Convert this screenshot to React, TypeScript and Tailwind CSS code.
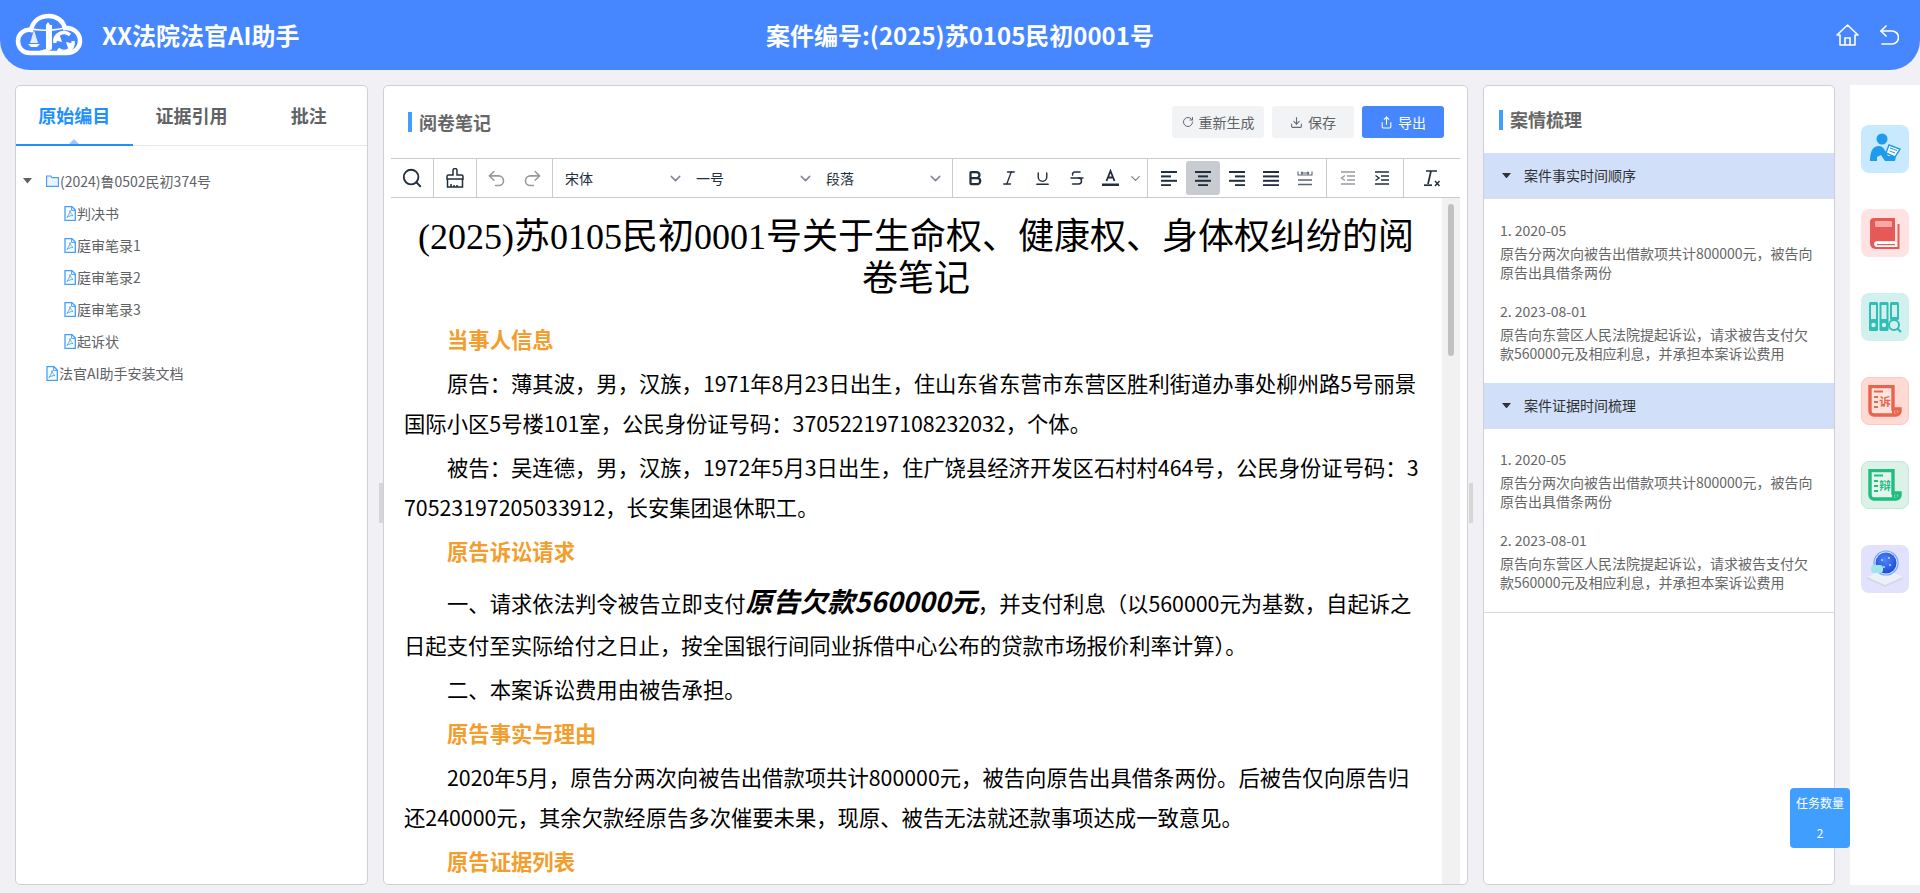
import React from 'react';
import { Bold, Italic, Underline, Strikethrough, Search, Undo2, Redo2, ChevronDown, RotateCw, Download, Share } from 'lucide-react';

const CJK = '"Noto Sans CJK SC","Noto Sans",sans-serif';

function Logo() {
  return (
    <svg width="68" height="44" viewBox="0 0 68 44">
      <path d="M15 40C7 40 3 34 3 28C3 21 9 16 16 17C18 8 25 3 34 3C42 3 48 8 50 15C58 14 65 20 65 28C65 35 59 40 52 40Z" fill="#4687ff" stroke="#fff" strokeWidth="4.5" />
      <path d="M3 30C5 38 10 41 18 41L30 41L37 36L37 12H35L33 9L31 12V36L24 38H15C9 38 6 35 5 30Z" fill="#fff" />
      <path d="M14 15C22 18 42 18 52 14" stroke="#fff" strokeWidth="1.5" fill="none" />
      <path d="M19 17L15 30H23Z" fill="#fff" opacity=".85" />
      <path d="M13 31H25L22 34H16Z" fill="#fff" />
      <path d="M40 30A9 9 0 0 1 55 22M58 28A9 9 0 0 1 43 36" stroke="#fff" strokeWidth="3.5" fill="none" />
      <path d="M38 27L44 20L47 29Z" fill="#fff" />
      <path d="M60 31L54 38L51 29Z" fill="#fff" />
    </svg>
  );
}

function Pdf() {
  return (
    <svg width="12" height="15" viewBox="0 0 12 15" className="shrink-0">
      <path d="M1 .7H8L11.3 4V14.3H1Z" fill="#fff" stroke="#409eff" strokeWidth="1.3" />
      <path d="M7.6 1V4.4H11" fill="none" stroke="#409eff" strokeWidth="1" />
      <path d="M6 4.5C5.5 7 5 9 2.8 11.5C5 10 7 9.5 9 9.6C7.5 8.5 6.5 7 6 4.5Z" fill="none" stroke="#409eff" strokeWidth=".9" />
    </svg>
  );
}

function Folder() {
  return (
    <svg width="13" height="12" viewBox="0 0 13 12" className="block shrink-0">
      <path d="M.6 1H4.8L6 2.6H12.4V11.4H.6Z" fill="#eaf4ff" stroke="#409eff" strokeWidth="1.1" />
    </svg>
  );
}

function Caret({ color = '#606266', size = 8 }: { color?: string; size?: number }) {
  return (
    <svg width={size} height={size * 0.6} viewBox="0 0 10 6" className="shrink-0">
      <path d="M0 0H10L5 6Z" fill={color} />
    </svg>
  );
}

function TreeRow({ indent, children, icon }: { indent: string; children: React.ReactNode; icon: React.ReactNode }) {
  return (
    <div className={`flex h-[32px] items-center text-[14px] text-[#606266] ${indent}`}>
      {icon}
      <span className="ml-[1px]">{children}</span>
    </div>
  );
}

function LeftPanel() {
  return (
    <section className="flex h-full w-[353px] shrink-0 flex-col rounded-[5px] border border-[#cfd0d6] bg-white">
      <div className="flex h-[60px] border-b border-[#e4e7ed] text-[18px] font-bold text-[#606266]">
        <div className="relative -mb-[1px] flex w-[117px] items-center justify-center border-b-2 border-[#1e90ff] text-[#1e90ff]">
          原始编目
          <span className="absolute bottom-0 left-1/2 h-0 w-0 -translate-x-1/2 border-x-[5px] border-b-[5px] border-x-transparent border-b-[#9cc9f5]" />
        </div>
        <div className="flex w-[118px] items-center justify-center">证据引用</div>
        <div className="flex w-[117px] items-center justify-center">批注</div>
      </div>
      <div className="pt-[19px]">
        <div className="flex h-[32px] items-center pl-[7px] text-[14px] text-[#606266]">
          <Caret size={9} />
          <span className="ml-[14px]"><Folder /></span>
          <span className="ml-[1px]">(2024)鲁0502民初374号</span>
        </div>
        {['判决书', '庭审笔录1', '庭审笔录2', '庭审笔录3', '起诉状'].map((t) => (
          <TreeRow key={t} indent="pl-[48px]" icon={<Pdf />}>{t}</TreeRow>
        ))}
        <TreeRow indent="pl-[30px]" icon={<Pdf />}>法官AI助手安装文档</TreeRow>
      </div>
    </section>
  );
}

function SectionTitle({ children }: { children: React.ReactNode }) {
  return (
    <div className="flex items-center gap-[7px] text-[18px] font-bold text-[#666]">
      <span className="h-[20px] w-[4px] bg-[#409eff]" />
      {children}
    </div>
  );
}

function Bars({ rows, color = '#222f3e' }: { rows: [number, number][]; color?: string }) {
  return (
    <svg width="18" height="16" viewBox="0 0 18 16">
      {rows.map(([x, w], i) => (
        <rect key={i} x={x} y={1 + i * 4.4} width={w} height="2" fill={color} />
      ))}
    </svg>
  );
}

function TBtn({ children, active, w = 'w-[34px]' }: { children: React.ReactNode; active?: boolean; w?: string }) {
  return (
    <div className={`flex h-[34px] items-center justify-center rounded-[3px] ${w} ${active ? 'bg-[#c8cbcf]' : ''}`}>
      {children}
    </div>
  );
}

function Select({ label, w }: { label: string; w: string }) {
  return (
    <div className={`flex items-center justify-between pr-[6px] text-[14px] text-[#222f3e] ${w}`}>
      <span>{label}</span>
      <ChevronDown size={17} color="#7d8590" strokeWidth={2} />
    </div>
  );
}

function Toolbar() {
  const ink = '#222f3e';
  return (
    <div className="mx-[7px] flex h-[40px] items-center border-y border-[#c9cacd]">
      <div className="flex h-full w-[43px] items-center justify-center border-r border-[#c9cacd]">
        <Search size={22} color={ink} strokeWidth={2} />
      </div>
      <div className="flex h-full w-[43px] items-center justify-center border-r border-[#c9cacd]">
        <svg width="18" height="20" viewBox="0 0 18 20" fill="none" stroke={ink} strokeWidth="1.5">
          <path d="M7 7V2.5A2 2 0 0 1 11 2.5V7H15.5A1.5 1.5 0 0 1 17 8.5V11H1V8.5A1.5 1.5 0 0 1 2.5 7Z" />
          <path d="M1.5 11V19H16.5V11" />
          <path d="M5 19V16M8 19V17M11 19V17" />
        </svg>
      </div>
      <div className="flex h-full w-[76px] items-center justify-center gap-[15px] border-r border-[#c9cacd]">
        <Undo2 size={21} color="#959aa1" strokeWidth={1.8} />
        <Redo2 size={21} color="#959aa1" strokeWidth={1.8} />
      </div>
      <div className="flex h-full w-[400px] items-center border-r border-[#c9cacd]">
        <Select label="宋体" w="w-[137px] pl-[12px]" />
        <Select label="一号" w="w-[130px] pl-[6px]" />
        <Select label="段落" w="w-[130px] pl-[6px]" />
      </div>
      <div className="flex h-full w-[195px] items-center justify-center border-r border-[#c9cacd]">
        <TBtn><Bold size={18} color={ink} strokeWidth={3} /></TBtn>
        <TBtn><Italic size={18} color={ink} strokeWidth={1.8} /></TBtn>
        <TBtn><Underline size={17} color={ink} strokeWidth={2} /></TBtn>
        <TBtn><Strikethrough size={18} color={ink} strokeWidth={2} /></TBtn>
        <TBtn>
          <svg width="19" height="18" viewBox="0 0 19 18" fill="none" stroke={ink}>
            <path d="M5.5 12L9.5 2L13.5 12M7 8.5H12" strokeWidth="1.8" />
            <rect x="1" y="14.5" width="17" height="2.5" fill={ink} stroke="none" />
          </svg>
        </TBtn>
        <ChevronDown size={15} color="#7d8590" />
      </div>
      <div className="flex h-full w-[179px] items-center justify-center border-r border-[#c9cacd]">
        <TBtn><Bars rows={[[1, 16], [1, 10], [1, 16], [1, 10]]} /></TBtn>
        <TBtn active><Bars rows={[[1, 16], [4, 10], [1, 16], [4, 10]]} /></TBtn>
        <TBtn><Bars rows={[[1, 16], [7, 10], [1, 16], [7, 10]]} /></TBtn>
        <TBtn><Bars rows={[[1, 16], [1, 16], [1, 16], [1, 16]]} /></TBtn>
        <TBtn>
          <svg width="16" height="16" viewBox="0 0 16 16" fill="none" stroke="#5a6472" strokeWidth="1.4">
            <path d="M1 1.5V5H15V1.5M4 3H12M4 3L5.5 1.8M4 3L5.5 4.2M12 3L10.5 1.8M12 3L10.5 4.2" strokeWidth="1.1" />
            <path d="M1 10H15M1 14.5H15" strokeWidth="1.7" />
          </svg>
        </TBtn>
      </div>
      <div className="flex h-full w-[77px] items-center justify-center border-r border-[#c9cacd]">
        <TBtn>
          <svg width="16" height="14" viewBox="0 0 16 14" fill="none" stroke="#959aa1">
            <path d="M1 1H15M7 5H15M7 9H15M1 13H15" strokeWidth="1.7" />
            <path d="M5 4.5L1.5 7L5 9.5" strokeWidth="1.4" />
          </svg>
        </TBtn>
        <TBtn>
          <svg width="16" height="14" viewBox="0 0 16 14" fill="none" stroke={ink}>
            <path d="M1 1H15M7 5H15M7 9H15M1 13H15" strokeWidth="1.7" />
            <path d="M1.5 4.5L5 7L1.5 9.5" strokeWidth="1.4" />
          </svg>
        </TBtn>
      </div>
      <div className="flex h-full flex-1 items-center justify-center">
        <svg width="18" height="18" viewBox="0 0 18 18" fill="none" stroke={ink}>
          <path d="M3 2H14M8 2L5 15" strokeWidth="1.7" />
          <path d="M1 16.2H9" strokeWidth="1.7" />
          <path d="M12 12L16.5 17M16.5 12L12 17" strokeWidth="1.5" />
        </svg>
      </div>
    </div>
  );
}

function Heading({ children }: { children: React.ReactNode }) {
  return <p className="mb-[4px] indent-[43px] text-[21.33px] font-bold leading-[40px] text-[#f39d2c]">{children}</p>;
}
function Para({ children }: { children: React.ReactNode }) {
  return <p className="mb-[4px] indent-[43px] text-[21.33px] leading-[40px] text-black break-all">{children}</p>;
}

function CenterPanel() {
  const btn = 'flex h-[32px] items-center justify-center gap-[5px] rounded-[3px] text-[14px]';
  return (
    <section className="relative flex h-full min-w-0 flex-1 flex-col rounded-[5px] border border-[#cfd0d6] bg-white">
      <div className="flex h-[72px] items-center justify-between pl-[24px] pr-[23px]">
        <SectionTitle>阅卷笔记</SectionTitle>
        <div className="flex gap-[8px]">
          <div className={`${btn} w-[92px] bg-[#f2f3f5] text-[#606266]`}><RotateCw size={12} color="#606a78" />重新生成</div>
          <div className={`${btn} w-[82px] bg-[#f2f3f5] text-[#606266]`}><Download size={13} color="#606a78" />保存</div>
          <div className={`${btn} w-[82px] bg-[#4687ff] text-white`}><Share size={13} color="#fff" />导出</div>
        </div>
      </div>
      <Toolbar />
      <div className="mx-[7px] flex min-h-0 flex-1">
        <div className="min-w-0 flex-1 overflow-hidden pl-[13px] pr-[17px] pt-[18px]">
          <h1 className="mb-[19px] pl-[3px] text-center text-[36px] font-normal leading-[42px] text-black" style={{ fontFamily: '"Liberation Serif","Noto Sans CJK SC",serif' }}>
            (2025)苏0105民初0001号关于生命权、健康权、身体权纠纷的阅卷笔记
          </h1>
          <Heading>当事人信息</Heading>
          <Para>原告：薄其波，男，汉族，1971年8月23日出生，住山东省东营市东营区胜利街道办事处柳州路5号丽景国际小区5号楼101室，公民身份证号码：370522197108232032，个体。</Para>
          <Para>被告：吴连德，男，汉族，1972年5月3日出生，住广饶县经济开发区石村村464号，公民身份证号码：370523197205033912，长安集团退休职工。</Para>
          <Heading>原告诉讼请求</Heading>
          <Para>一、请求依法判令被告立即支付<em className="text-[27.2px] font-bold italic leading-[50px]">原告欠款560000元</em>，并支付利息（以560000元为基数，自起诉之日起支付至实际给付之日止，按全国银行间同业拆借中心公布的贷款市场报价利率计算）。</Para>
          <Para>二、本案诉讼费用由被告承担。</Para>
          <Heading>原告事实与理由</Heading>
          <Para>2020年5月，原告分两次向被告出借款项共计800000元，被告向原告出具借条两份。后被告仅向原告归还240000元，其余欠款经原告多次催要未果，现原、被告无法就还款事项达成一致意见。</Para>
          <Heading>原告证据列表</Heading>
        </div>
        <div className="w-[18px] shrink-0 bg-[#f1f1f1] px-[6px] pt-[6px]">
          <div className="h-[152px] rounded-full bg-[#c1c1c1]" />
        </div>
      </div>
      <span className="absolute -left-[5px] top-[397px] h-[40px] w-[4px] bg-[#d6d6d6]" />
      <span className="absolute -right-[6px] top-[397px] h-[40px] w-[4px] bg-[#d6d6d6]" />
    </section>
  );
}

function Timeline({ pad }: { pad: string }) {
  return (
    <div className={`flex flex-col gap-[18px] px-[16px] pb-[20px] text-[14px] text-[#666] ${pad}`}>
      <div>
        <div className="mb-[3px] leading-[22px]">1. 2020-05</div>
        <div className="leading-[19px]">原告分两次向被告出借款项共计800000元，被告向原告出具借条两份</div>
      </div>
      <div>
        <div className="mb-[3px] leading-[22px]">2. 2023-08-01</div>
        <div className="leading-[19px]">原告向东营区人民法院提起诉讼，请求被告支付欠款560000元及相应利息，并承担本案诉讼费用</div>
      </div>
    </div>
  );
}

function AccHeader({ children }: { children: React.ReactNode }) {
  return (
    <div className="flex h-[46px] items-center gap-[13px] border-b border-[#d9dde5] bg-[#d1dff8] pl-[18px] text-[14px] text-[#303133]">
      <Caret color="#303133" size={9} />
      {children}
    </div>
  );
}

function RightPanel() {
  return (
    <section className="flex h-full w-[352px] shrink-0 flex-col rounded-[5px] border border-[#cfd0d6] bg-white">
      <div className="flex h-[67px] items-center pl-[15px]">
        <SectionTitle>案情梳理</SectionTitle>
      </div>
      <AccHeader>案件事实时间顺序</AccHeader>
      <Timeline pad="pt-[20px]" />
      <AccHeader>案件证据时间梳理</AccHeader>
      <Timeline pad="pt-[19px]" />
      <div className="border-t border-[#d9d9dd]" />
    </section>
  );
}

function Scroll({ color, ch }: { color: string; ch: string }) {
  return (
    <svg width="34" height="32" viewBox="0 0 34 32">
      <path d="M2 1.5H25V24H32V26A4 4 0 0 1 28 30H6A4 4 0 0 1 2 26Z" fill="#fff" fillOpacity=".25" stroke={color} strokeWidth="3.4" />
      <path d="M25 24V30" stroke={color} strokeWidth="2" />
      <path d="M28 25.5V28" stroke={color} strokeWidth="3" />
      <path d="M6 6.5H15M6 12H10M6 17H10M6 22H10" stroke={color} strokeWidth="2" />
      <text x="17" y="21" textAnchor="middle" fontSize="11.5" fontWeight="700" fill={color} fontFamily={CJK}>{ch}</text>
    </svg>
  );
}

function Rail() {
  const tile = 'flex h-[48px] w-[48px] items-center justify-center rounded-[8px]';
  return (
    <aside className="flex h-full w-[70px] shrink-0 flex-col items-center gap-[36px] bg-white pt-[40px]">
      <div className={`${tile} bg-[#c9e9ff]`}>
        <svg width="34" height="32" viewBox="0 0 34 32">
          <circle cx="14" cy="6" r="5.5" fill="#1e9bea" />
          <path d="M2 28C2 18 5 13 11 13C15 13 17 17 20 23H28L27 28H17L13 22L9 24V28Z" fill="#1e9bea" />
          <path d="M21 12L32 16L27 24L18 20Z" fill="#fff" stroke="#1e9bea" strokeWidth="1.4" />
          <path d="M22 15L29 17.5M21.5 18L27 20" stroke="#1e9bea" strokeWidth="1" />
        </svg>
      </div>
      <div className={`${tile} bg-[#ffe2e1]`}>
        <svg width="32" height="33" viewBox="0 0 32 33">
          <rect x="5" y="25" width="24" height="5" rx="2.5" fill="#fff" />
          <path d="M8 27.6H26" stroke="#e55a56" strokeWidth="1.2" />
          <path d="M1 5A4 4 0 0 1 5 1H26V24H8C4 24 4 30 8 30H28.5V7H30.5V32H7C3 32 1 29 1 26Z" fill="#e55a56" />
          <rect x="6" y="4" width="17" height="6" rx="1" fill="#f7a9a6" />
        </svg>
      </div>
      <div className={`${tile} bg-[#d2f0ed]`}>
        <svg width="34" height="32" viewBox="0 0 34 32">
          <rect x="1" y="1" width="9" height="29" rx="1.5" fill="#2fbdb6" />
          <rect x="11.5" y="1" width="9" height="29" rx="1.5" fill="#2fbdb6" />
          <rect x="22" y="1" width="9" height="18" rx="1.5" fill="#2fbdb6" />
          <rect x="3" y="4" width="5" height="14" fill="#d2f0ed" />
          <rect x="13.5" y="4" width="5" height="14" fill="#d2f0ed" />
          <rect x="24" y="4" width="5" height="12" fill="#d2f0ed" />
          <circle cx="5.5" cy="24" r="2.2" fill="#d2f0ed" />
          <circle cx="16" cy="24" r="2.2" fill="#d2f0ed" />
          <circle cx="26" cy="24" r="5" fill="#d2f0ed" stroke="#2fbdb6" strokeWidth="2" />
          <path d="M29.5 27.5L33 31" stroke="#2fbdb6" strokeWidth="2.2" />
        </svg>
      </div>
      <div className={`${tile} border border-[#fdc9c0] bg-[#ffdad4]`}><Scroll color="#e8644a" ch="诉" /></div>
      <div className={`${tile} border border-[#bfe8d8] bg-[#dcf1e8]`}><Scroll color="#1fbd7e" ch="辩" /></div>
      <div className={`${tile} bg-[#e2e2fd]`}>
        <svg width="40" height="40" viewBox="0 0 40 40">
          <defs>
            <radialGradient id="ball" cx="45%" cy="35%" r="70%">
              <stop offset="0%" stopColor="#4f86f7" />
              <stop offset="100%" stopColor="#1a46d8" />
            </radialGradient>
          </defs>
          <path d="M20 20L38 28L20 36L2 28Z" fill="#eef0f8" />
          <path d="M2 28L20 36L38 28V30L20 38L2 30Z" fill="#d5d8e8" />
          <circle cx="21" cy="14" r="12" fill="none" stroke="#6fa8f7" strokeWidth="1.2" />
          <circle cx="21" cy="14" r="10.5" fill="url(#ball)" />
          <circle cx="17" cy="11" r="1" fill="#bcd4ff" /><circle cx="24" cy="9" r="1" fill="#bcd4ff" /><circle cx="25" cy="16" r="1" fill="#bcd4ff" /><circle cx="19" cy="18" r="1" fill="#bcd4ff" />
          <rect x="6" y="16" width="12" height="8" rx="3" fill="#9fe6ea" />
        </svg>
      </div>
    </aside>
  );
}

export default function App() {
  return (
    <div className="relative flex h-[893px] w-full flex-col overflow-hidden bg-[#f0f0f5]" style={{ fontFamily: CJK }}>
      <header className="relative flex h-[70px] shrink-0 items-center justify-between rounded-b-[30px] bg-[#4687ff] pl-[15px] pr-[21px] text-white">
        <div className="flex items-center gap-[19px]">
          <Logo />
          <span className="text-[24px] font-bold">XX法院法官AI助手</span>
        </div>
        <div className="pointer-events-none absolute left-0 right-0 text-center text-[24px] font-bold">案件编号:(2025)苏0105民初0001号</div>
        <div className="flex items-center gap-[21px]">
          <svg width="23" height="22" viewBox="0 0 23 22" fill="none" stroke="#fff" strokeWidth="1.6">
            <path d="M1 11L11.5 1L22 11H19V21H4V11Z" strokeLinejoin="round" />
            <path d="M9 21V14H14V21" />
          </svg>
          <svg width="19" height="20" viewBox="0 0 19 20" fill="none" stroke="#fff" strokeWidth="1.7" strokeLinecap="round" strokeLinejoin="round">
            <path d="M6 1L1 6L6 11" />
            <path d="M1 6H12A6 6 0 0 1 12 19H2" />
          </svg>
        </div>
      </header>
      <main className="flex min-h-0 flex-1 gap-[15px] pb-[8px] pl-[15px] pt-[15px]">
        <LeftPanel />
        <CenterPanel />
        <RightPanel />
        <Rail />
      </main>
      <div className="absolute left-[1790px] top-[788px] flex h-[60px] w-[60px] flex-col items-center justify-between rounded-[4px] bg-[#409eff] py-[6px] text-[12px] text-white">
        <span>任务数量</span>
        <span>2</span>
      </div>
    </div>
  );
}
